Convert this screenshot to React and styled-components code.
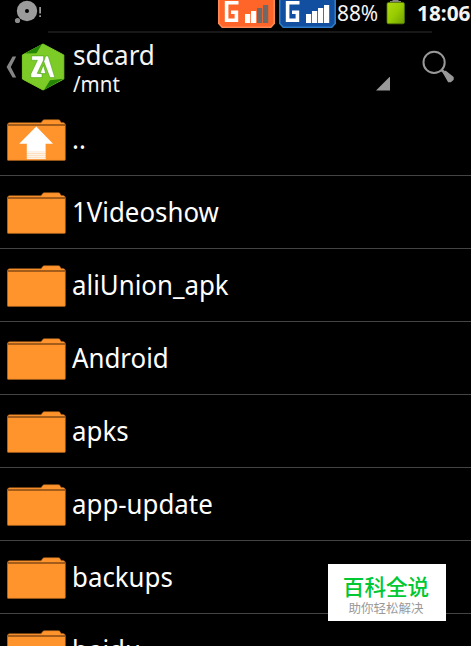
import React from "react";
import styled, { createGlobalStyle } from "styled-components";

const folders = [
  "1Videoshow",
  "aliUnion_apk",
  "Android",
  "apks",
  "app-update",
  "backups",
  "baidu",
];

const FolderIcon = ({ up }) => (
  <svg width="60" height="43" viewBox="0 0 60 43">
    <path
      d="M0.3 6 Q0.7 3.7 2.5 3.7 H34 L36 1.2 Q36.4 0.7 37.2 0.7 H51.5 Q52.5 0.7 53 1.5 L54 3.4 H56 Q58.4 3.8 58.4 6 V40.5 Q58.4 41.4 57.4 41.4 H1.3 Q0.3 41.4 0.3 40.5 Z"
      fill="#ff942c"
      stroke="#a85f1b"
      strokeWidth="0.6"
    />
    <path d="M0.6 6 H58.2" stroke="#a35c1a" strokeWidth="2" />
    {up && (
      <g fill="#fff">
        <path d="M29.3 7.5 L46 24.8 H38.6 V32.5 H19.8 V24.8 H12.2 Z" />
        <path d="M19.8 32 h18.8 v8.2 h-18.8z" opacity="0.72" />
        <path d="M19.8 33 h18.8 v1 h-18.8z M19.8 35 h18.8 v1 h-18.8z M19.8 37 h18.8 v1 h-18.8z M19.8 39 h18.8 v1 h-18.8z" opacity="0.6" />
      </g>
    )}
  </svg>
);

const DiscIcon = () => (
  <svg width="30" height="24" viewBox="0 0 30 24">
    <circle cx="13" cy="11" r="10.2" fill="#9b9b9b" />
    <circle cx="13" cy="11" r="2" fill="#000" />
    <circle cx="3.5" cy="20.5" r="2.6" fill="#8c8c8c" />
    <path d="M25.3 7 h1.6 v6.4 h-1.6z M25.3 15.3 h1.6 v1.7 h-1.6z" fill="#aaa" />
  </svg>
);

const SignalIcon = ({ color, edge, weak }) => (
  <svg width="57" height="28" viewBox="0 0 57 28">
    <path
      d="M0.8 -2 V23.5 L4.2 27.2 H52.8 L56.2 23.5 V-2 Z"
      fill={color}
      stroke={edge}
      strokeWidth="1.6"
    />
    <path
      d="M20.5 2.7 H8.6 V20.2 H18.4 V12.2 H13"
      fill="none"
      stroke="#fff"
      strokeWidth="3.6"
    />
    <path d="M27 14 h5.2 v9 h-5.2z M33 11 h5.2 v12 h-5.2z" fill="#fff" />
    <path
      d="M39 8 h5.2 v15 h-5.2z M45 5 h5.2 v18 h-5.2z"
      fill={weak ? "#6f6a68" : "#fff"}
    />
  </svg>
);

const BatteryIcon = () => (
  <svg width="20" height="26" viewBox="0 0 20 26">
    <defs>
      <linearGradient id="charge" x1="0" y1="0" x2="1" y2="1">
        <stop offset="0" stopColor="#b2d913" />
        <stop offset="0.5" stopColor="#98cc00" />
        <stop offset="1" stopColor="#70a000" />
      </linearGradient>
    </defs>
    <path d="M6.5 -1 h6 v2 h2.5 v1.6 h-11 v-1.6 h2.5z" fill="#858585" />
    <rect x="1" y="2.4" width="17.4" height="21.4" rx="1.6" fill="url(#charge)" stroke="#557c09" strokeWidth="0.8" />
  </svg>
);

const BackIcon = () => (
  <svg width="11" height="22" viewBox="0 0 11 22">
    <path d="M6.6 0.5 H10.2 L4.8 11 L10.2 21.5 H6.6 L0.6 11 Z" fill="#858585" />
  </svg>
);

const AppLogo = () => (
  <svg width="44" height="48" viewBox="0 0 44 48">
    <path d="M22 1 L42.8 12 V36 L22 47 L1.4 36 V12 Z" fill="#7ccb27" stroke="#7ccb27" strokeLinejoin="round" />
    <path d="M21 1 L4 10.5 L15.5 10.2 Z M23 47 L42.6 35.8 L29 37.2 Z" fill="#258605" />
    <path
      d="M10.6 12.9 H22.6 V17 L16.2 30.4 H21 V34.6 H9.8 V31 L16.4 17.3 H10.6 Z M24.6 13 H27.2 L33.8 34.6 H29 L22.8 18.6 Z M22.4 22 L24.8 30.6 H19 Z"
      fill="#fff"
      stroke="#389a0c"
      strokeWidth="0.5"
    />
  </svg>
);

const SearchIcon = () => (
  <svg width="34" height="34" viewBox="0 0 34 34">
    <circle cx="12.1" cy="12.4" r="10.6" fill="none" stroke="#999" strokeWidth="2" />
    <path d="M19.6 20 L24 24" stroke="#999" strokeWidth="2.6" />
    <path
      d="M21.6 23 L23.4 21.4 L31 27.4 V29.4 L28.6 31.6 H26.6 Z"
      fill="#999"
      stroke="#999"
      strokeWidth="1.4"
      strokeLinejoin="round"
    />
  </svg>
);

const App = () => {
  return (
    <>
      <GlobalStyle />
      <Screen>
        <StatusBar>
          <DiscSlot>
            <DiscIcon />
          </DiscSlot>
          <Signals>
            <SignalIcon color="#ff6529" edge="#ff8a55" weak />
            <SignalIcon color="#124fa0" edge="#2f7cc8" />
          </Signals>
          <Percent>88%</Percent>
          <BatteryIcon />
          <Clock>18:06</Clock>
        </StatusBar>
        <Header>
          <BackIcon />
          <Place>
            <AppLogo />
            <Path>
              <Title>sdcard</Title>
              <Subtitle>/mnt</Subtitle>
            </Path>
          </Place>
          <Triangle />
          <SearchIcon />
        </Header>
        <List>
          <Row>
            <FolderIcon up />
            <Name>..</Name>
          </Row>
          {folders.map((name) => (
            <Row key={name}>
              <FolderIcon />
              <Name>{name}</Name>
            </Row>
          ))}
        </List>
        <Watermark>
          <Brand>百科全说</Brand>
          <Slogan>助你轻松解决</Slogan>
        </Watermark>
      </Screen>
    </>
  );
};

const GlobalStyle = createGlobalStyle`
  * {
    box-sizing: border-box;
  }
  body {
    margin: 0;
    background: #000;
    overflow: hidden;
  }
  svg {
    display: block;
    flex-shrink: 0;
  }
`;

const Screen = styled.div`
  position: relative;
  width: 471px;
  height: 646px;
  overflow: hidden;
  background: #000;
  color: #f4f4f4;
  font-family: "Noto Sans", "Open Sans", sans-serif;
`;

const StatusBar = styled.div`
  display: flex;
  align-items: flex-start;
  height: 33px;
  padding-left: 14px;
  background: linear-gradient(#181818, #181818) 48px 31px / 384px 2px no-repeat;
`;

const DiscSlot = styled.div`
  flex: 0 0 204px;
`;

const Signals = styled.div`
  display: flex;
  flex-shrink: 0;
  gap: 4px;
`;

const Percent = styled.span`
  flex: 0 0 50px;
  padding-left: 1px;
  font-size: 22px;
  line-height: 25px;
  white-space: nowrap;
  transform: scaleX(0.95);
  transform-origin: left;
`;

const Clock = styled.span`
  margin-left: 11px;
  font-size: 22px;
  font-weight: 700;
  line-height: 24px;
  transform: scaleX(0.945);
  transform-origin: left;
`;

const Header = styled.header`
  display: flex;
  align-items: center;
  height: 70px;
  padding: 0 15px 2px 6px;
`;

const Place = styled.div`
  flex: 1;
  display: flex;
  align-items: center;
  margin-left: 4px;
`;

const Path = styled.div`
  padding: 2px 0 0 8px;
`;

const Title = styled.div`
  font-size: 27px;
  line-height: 30px;
  transform: scaleX(0.965);
  transform-origin: left;
`;

const Subtitle = styled.div`
  font-size: 22px;
  line-height: 27px;
  transform: scaleX(0.93);
  transform-origin: left;
`;

const Triangle = styled.div`
  width: 14px;
  height: 14px;
  margin: 33px 32px 0 0;
  background: #999;
  clip-path: polygon(100% 0, 100% 100%, 0 100%);
`;

const List = styled.div`
  display: flex;
  flex-direction: column;
`;

const Row = styled.div`
  display: flex;
  align-items: center;
  flex-shrink: 0;
  height: 73px;
  padding: 2px 0 0 7px;
  border-bottom: 1px solid #444;
`;

const Name = styled.span`
  margin: 0 0 2px 5px;
  color: #fff;
  font-size: 27px;
  line-height: 36px;
  transform: scaleX(0.957);
  transform-origin: left;
`;

const Watermark = styled.div`
  position: absolute;
  left: 328px;
  top: 564px;
  display: flex;
  flex-direction: column;
  align-items: center;
  width: 118px;
  height: 57px;
  padding: 9px 2px 0 0;
  background: #fff;
  font-family: "Noto Sans CJK SC", sans-serif;
`;

const Brand = styled.div`
  color: #00c832;
  font-size: 21.6px;
  font-weight: 500;
  line-height: 26px;
`;

const Slogan = styled.div`
  color: #999;
  font-size: 12.5px;
  line-height: 17px;
`;

export default App;
